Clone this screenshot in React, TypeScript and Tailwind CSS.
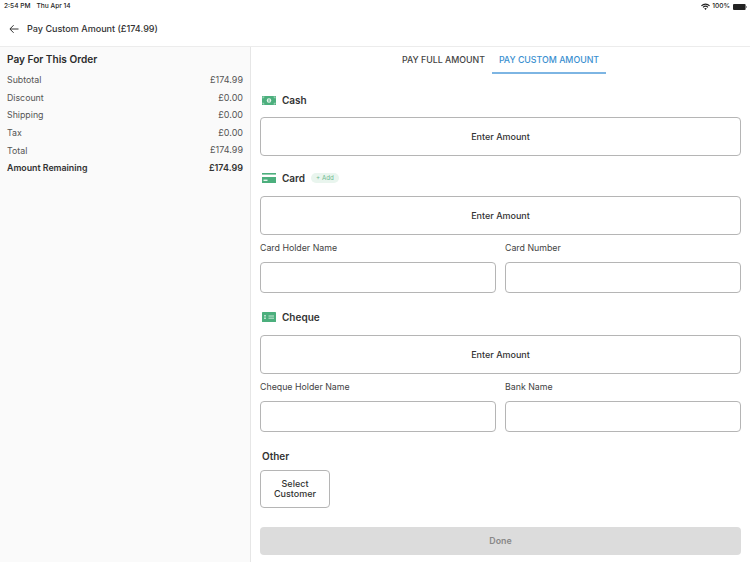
import React from 'react'

const rows = [
  ['Subtotal', '£174.99'],
  ['Discount', '£0.00'],
  ['Shipping', '£0.00'],
  ['Tax', '£0.00'],
  ['Total', '£174.99'],
]

function CashIcon() {
  return (
    <svg width="14" height="9" viewBox="0 0 14 9" className="block">
      <rect width="14" height="9" rx="0.5" fill="#4caf7d" />
      <circle cx="7" cy="4.5" r="2.2" fill="#e8f5ee" />
      <rect x="6.5" y="3.2" width="1" height="2.6" fill="#4caf7d" />
      <path d="M1 1h1.4M1 1v1.4M13 1h-1.4M13 1v1.4M1 8h1.4M1 8V6.6M13 8h-1.4M13 8V6.6" stroke="#e8f5ee" strokeWidth="0.6" fill="none" />
    </svg>
  )
}

function CardIcon() {
  return (
    <svg width="14" height="10" viewBox="0 0 14 10" className="block">
      <rect y="0" width="14" height="1.6" fill="#4caf7d" />
      <path d="M0 4h14v6H0z" fill="#4caf7d" />
      <rect x="1.5" y="6.6" width="4" height="1.4" fill="#e8f5ee" />
    </svg>
  )
}

function ChequeIcon() {
  return (
    <svg width="14" height="10" viewBox="0 0 14 10" className="block">
      <rect width="14" height="10" rx="0.6" fill="#4caf7d" />
      <path d="M2 3.5h2M2 5h2M2 6.5h2" stroke="#e8f5ee" strokeWidth="0.7" />
      <path d="M6.5 4h5.5M6.5 6.2h5.5" stroke="#e8f5ee" strokeWidth="0.8" />
    </svg>
  )
}

function AmountBox() {
  return (
    <button className="flex h-[39px] w-full items-center justify-center rounded-[4px] border border-[#b5b5b5] bg-white text-[9px] font-medium text-[#333]">
      Enter Amount
    </button>
  )
}

function Field({ label }: { label: string }) {
  return (
    <div className="flex-1">
      <div className="text-[8.8px] leading-[12px] text-[#444]">{label}</div>
      <div className="mt-[8px] h-[31px] rounded-[4px] border border-[#b5b5b5] bg-white" />
    </div>
  )
}

export default function App() {
  return (
    <div className="flex h-[562px] w-[750px] flex-col overflow-hidden bg-white text-[#333] font-['Inter',sans-serif]">
      {/* status bar */}
      <div className="flex h-[12px] items-center justify-between pl-[4px] pr-[3px] pt-[2px] text-[6.6px] font-medium text-[#222]">
        <div className="flex gap-[6px]">
          <span>2:54 PM</span>
          <span>Thu Apr 14</span>
        </div>
        <div className="flex items-center gap-[2px]">
          <svg width="9" height="7" viewBox="0 0 9 7">
            <path d="M0 2.4a6.4 6.4 0 0 1 9 0l-.8.8a5.2 5.2 0 0 0-7.4 0zM1.6 4a4.2 4.2 0 0 1 5.8 0l-.8.8a3 3 0 0 0-4.2 0zM3.2 5.6a1.8 1.8 0 0 1 2.6 0L4.5 7z" fill="#222" />
          </svg>
          <span>100%</span>
          <svg width="14" height="6" viewBox="0 0 14 6" className="ml-[1px]">
            <rect width="12.6" height="6" rx="1" fill="#222" />
            <rect x="13" y="2" width="1" height="2" fill="#999" />
          </svg>
        </div>
      </div>

      {/* header */}
      <div className="flex h-[35px] items-center border-b border-[#ececec] pl-[9px]">
        <svg width="10" height="10" viewBox="0 0 10 10" className="mr-[8px]">
          <path d="M9.5 5H1M4.6 1.2 0.9 5l3.7 3.8" stroke="#333" strokeWidth="1" fill="none" />
        </svg>
        <span className="text-[9.05px] font-medium">Pay Custom Amount (£174.99)</span>
      </div>

      <div className="flex flex-1">
        {/* left summary */}
        <div className="w-[251px] border-r border-[#e6e6e6] bg-[#fafafa] px-[7px] pt-[5px]">
          <div className="text-[10.1px] font-semibold leading-[14px] text-[#2b2b2b]">Pay For This Order</div>
          <div className="mt-[5px]">
            {rows.map(([label, value]) => (
              <div key={label} className="flex h-[17.6px] items-center justify-between text-[8.8px] text-[#555]">
                <span>{label}</span>
                <span className="text-[9px]">{value}</span>
              </div>
            ))}
            <div className="flex h-[17.6px] items-center justify-between text-[8.8px] font-semibold text-[#333]">
              <span>Amount Remaining</span>
              <span className="text-[9px]">£174.99</span>
            </div>
          </div>
        </div>

        {/* right form */}
        <div className="flex flex-1 flex-col px-[9px]">
          <div className="flex justify-center">
            <div className="flex h-[27px] items-center border-b-2 border-transparent px-[7px] text-[8.8px] font-medium text-[#444]">PAY FULL AMOUNT</div>
            <div className="flex h-[27px] items-center border-b-2 border-[#7db5e3] px-[7px] text-[8.8px] font-medium text-[#3a8fd0]">PAY CUSTOM AMOUNT</div>
          </div>

          <div className="mt-[18px] flex h-[16px] items-center gap-[6px] pl-[2px]">
            <CashIcon />
            <span className="text-[10px] font-semibold">Cash</span>
          </div>
          <div className="mt-[9px]">
            <AmountBox />
          </div>

          <div className="mt-[14px] flex h-[16px] items-center gap-[6px] pl-[2px]">
            <CardIcon />
            <span className="text-[10px] font-semibold">Card</span>
            <span className="flex h-[10px] items-center rounded-full bg-[#e9f5ee] px-[5px] text-[6.2px] text-[#6cb98e]">+ Add</span>
          </div>
          <div className="mt-[10px]">
            <AmountBox />
          </div>
          <div className="mt-[7px] flex gap-[9px]">
            <Field label="Card Holder Name" />
            <Field label="Card Number" />
          </div>

          <div className="mt-[16px] flex h-[16px] items-center gap-[6px] pl-[2px]">
            <ChequeIcon />
            <span className="text-[10px] font-semibold">Cheque</span>
          </div>
          <div className="mt-[10px]">
            <AmountBox />
          </div>
          <div className="mt-[7px] flex gap-[9px]">
            <Field label="Cheque Holder Name" />
            <Field label="Bank Name" />
          </div>

          <div className="mt-[17px] pl-[2px] text-[10px] font-semibold leading-[14px]">Other</div>
          <button className="mt-[7px] h-[38px] w-[70px] rounded-[4px] border border-[#b5b5b5] bg-white text-[9px] font-medium leading-[10px] text-[#333]">
            Select
            <br />
            Customer
          </button>
          <button className="mt-[19px] h-[28px] w-full rounded-[4px] bg-[#dcdcdc] text-[8.8px] font-semibold text-[#888]">Done</button>
        </div>
      </div>
    </div>
  )
}
